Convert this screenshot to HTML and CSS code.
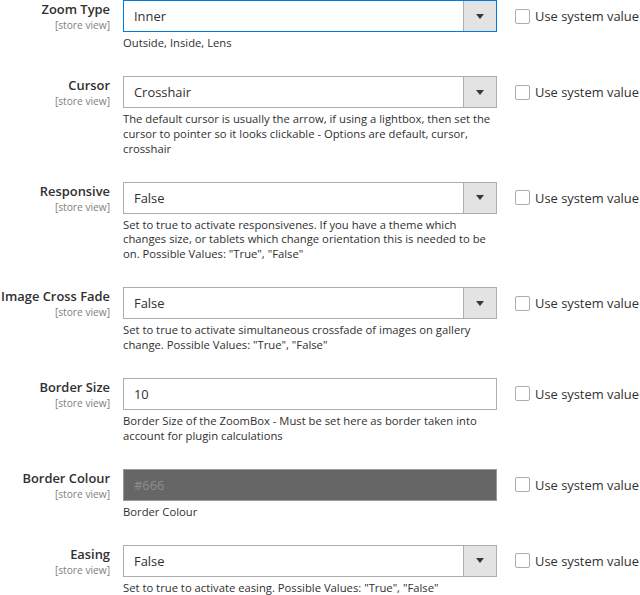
FILE: index.html
```html
<!DOCTYPE html>
<html>
<head>
<meta charset="utf-8">
<link rel="stylesheet" href="styles.css">
</head>
<body>
<div class="form">
  <div class="row">
    <div class="label"><span class="name">Zoom Type</span><span class="scope">[store view]</span></div>
    <div class="field">
      <div class="control select focus"><span class="value">Inner</span><span class="arrow"></span></div>
      <div class="note">Outside, Inside, Lens</div>
    </div>
    <div class="use"><span class="check"></span><span class="use-text">Use system value</span></div>
  </div>
  <div class="row">
    <div class="label"><span class="name">Cursor</span><span class="scope">[store view]</span></div>
    <div class="field">
      <div class="control select"><span class="value">Crosshair</span><span class="arrow"></span></div>
      <div class="note">The default cursor is usually the arrow, if using a lightbox, then set the cursor to pointer so it looks clickable - Options are default, cursor, crosshair</div>
    </div>
    <div class="use"><span class="check"></span><span class="use-text">Use system value</span></div>
  </div>
  <div class="row">
    <div class="label"><span class="name">Responsive</span><span class="scope">[store view]</span></div>
    <div class="field">
      <div class="control select"><span class="value">False</span><span class="arrow"></span></div>
      <div class="note">Set to true to activate responsivenes. If you have a theme which changes size, or tablets which change orientation this is needed to be on. Possible Values: "True", "False"</div>
    </div>
    <div class="use"><span class="check"></span><span class="use-text">Use system value</span></div>
  </div>
  <div class="row">
    <div class="label"><span class="name">Image Cross Fade</span><span class="scope">[store view]</span></div>
    <div class="field">
      <div class="control select"><span class="value">False</span><span class="arrow"></span></div>
      <div class="note">Set to true to activate simultaneous crossfade of images on gallery change. Possible Values: "True", "False"</div>
    </div>
    <div class="use"><span class="check"></span><span class="use-text">Use system value</span></div>
  </div>
  <div class="row">
    <div class="label"><span class="name">Border Size</span><span class="scope">[store view]</span></div>
    <div class="field">
      <div class="control"><span class="value">10</span></div>
      <div class="note">Border Size of the ZoomBox - Must be set here as border taken into account for plugin calculations</div>
    </div>
    <div class="use"><span class="check"></span><span class="use-text">Use system value</span></div>
  </div>
  <div class="row">
    <div class="label"><span class="name">Border Colour</span><span class="scope">[store view]</span></div>
    <div class="field">
      <div class="control colour"><span class="value">#666</span></div>
      <div class="note">Border Colour</div>
    </div>
    <div class="use"><span class="check"></span><span class="use-text">Use system value</span></div>
  </div>
  <div class="row">
    <div class="label"><span class="name">Easing</span><span class="scope">[store view]</span></div>
    <div class="field">
      <div class="control select"><span class="value">False</span><span class="arrow"></span></div>
      <div class="note">Set to true to activate easing. Possible Values: "True", "False"</div>
    </div>
    <div class="use"><span class="check"></span><span class="use-text">Use system value</span></div>
  </div>
</div>
</body>
</html>
```
FILE: styles.css
```css
html, body {
  margin: 0;
  padding: 0;
  background: #fff;
  overflow: hidden;
}
body {
  font-family: "Open Sans", "Noto Sans", sans-serif;
  color: #303030;
  width: 640px;
}
.form {
  display: flex;
  flex-direction: column;
}
.row {
  display: flex;
  align-items: flex-start;
  padding-bottom: 25.25px;
}
.label {
  flex: none;
  width: 110px;
  margin-right: 13px;
  display: flex;
  flex-direction: column;
  align-items: flex-end;
  text-align: right;
  white-space: nowrap;
}
.name {
  font-size: 12.9px;
  font-weight: 600;
  line-height: 18px;
  color: #303030;
}
.scope {
  font-size: 10.2px;
  line-height: 14px;
  color: #808080;
}
.field {
  width: 374px;
  flex: none;
}
.control {
  box-sizing: border-box;
  height: 32px;
  border: 1px solid #adadad;
  background: #fff;
  display: flex;
  align-items: center;
  font-size: 12.9px;
  padding-left: 10px;
}
.control.focus {
  border-color: #007bdb;
}
.control.colour {
  background: #666666;
  border-color: #9a9a9a;
}
.control.colour .value {
  color: #8e8e8e;
}
.value {
  flex: 1;
  line-height: 18px;
}
.arrow {
  align-self: stretch;
  width: 32px;
  background: #e3e3e3;
  border-left: 1px solid #adadad;
  display: flex;
  align-items: center;
  justify-content: center;
}
.arrow::after {
  content: "";
  width: 0;
  height: 0;
  border-left: 4px solid transparent;
  border-right: 4px solid transparent;
  border-top: 5px solid #41362f;
}
.note {
  margin-top: 4px;
  font-size: 11.25px;
  line-height: 14.75px;
  color: #303030;
}
.use {
  flex: none;
  margin-left: 18px;
  height: 32px;
  display: flex;
  align-items: center;
  white-space: nowrap;
}
.check {
  box-sizing: border-box;
  width: 15px;
  height: 15px;
  border: 1px solid #adadad;
  border-radius: 2px;
  background: #fff;
  margin-right: 5px;
}
.use-text {
  font-size: 12.9px;
  line-height: 18px;
  color: #303030;
}
```
